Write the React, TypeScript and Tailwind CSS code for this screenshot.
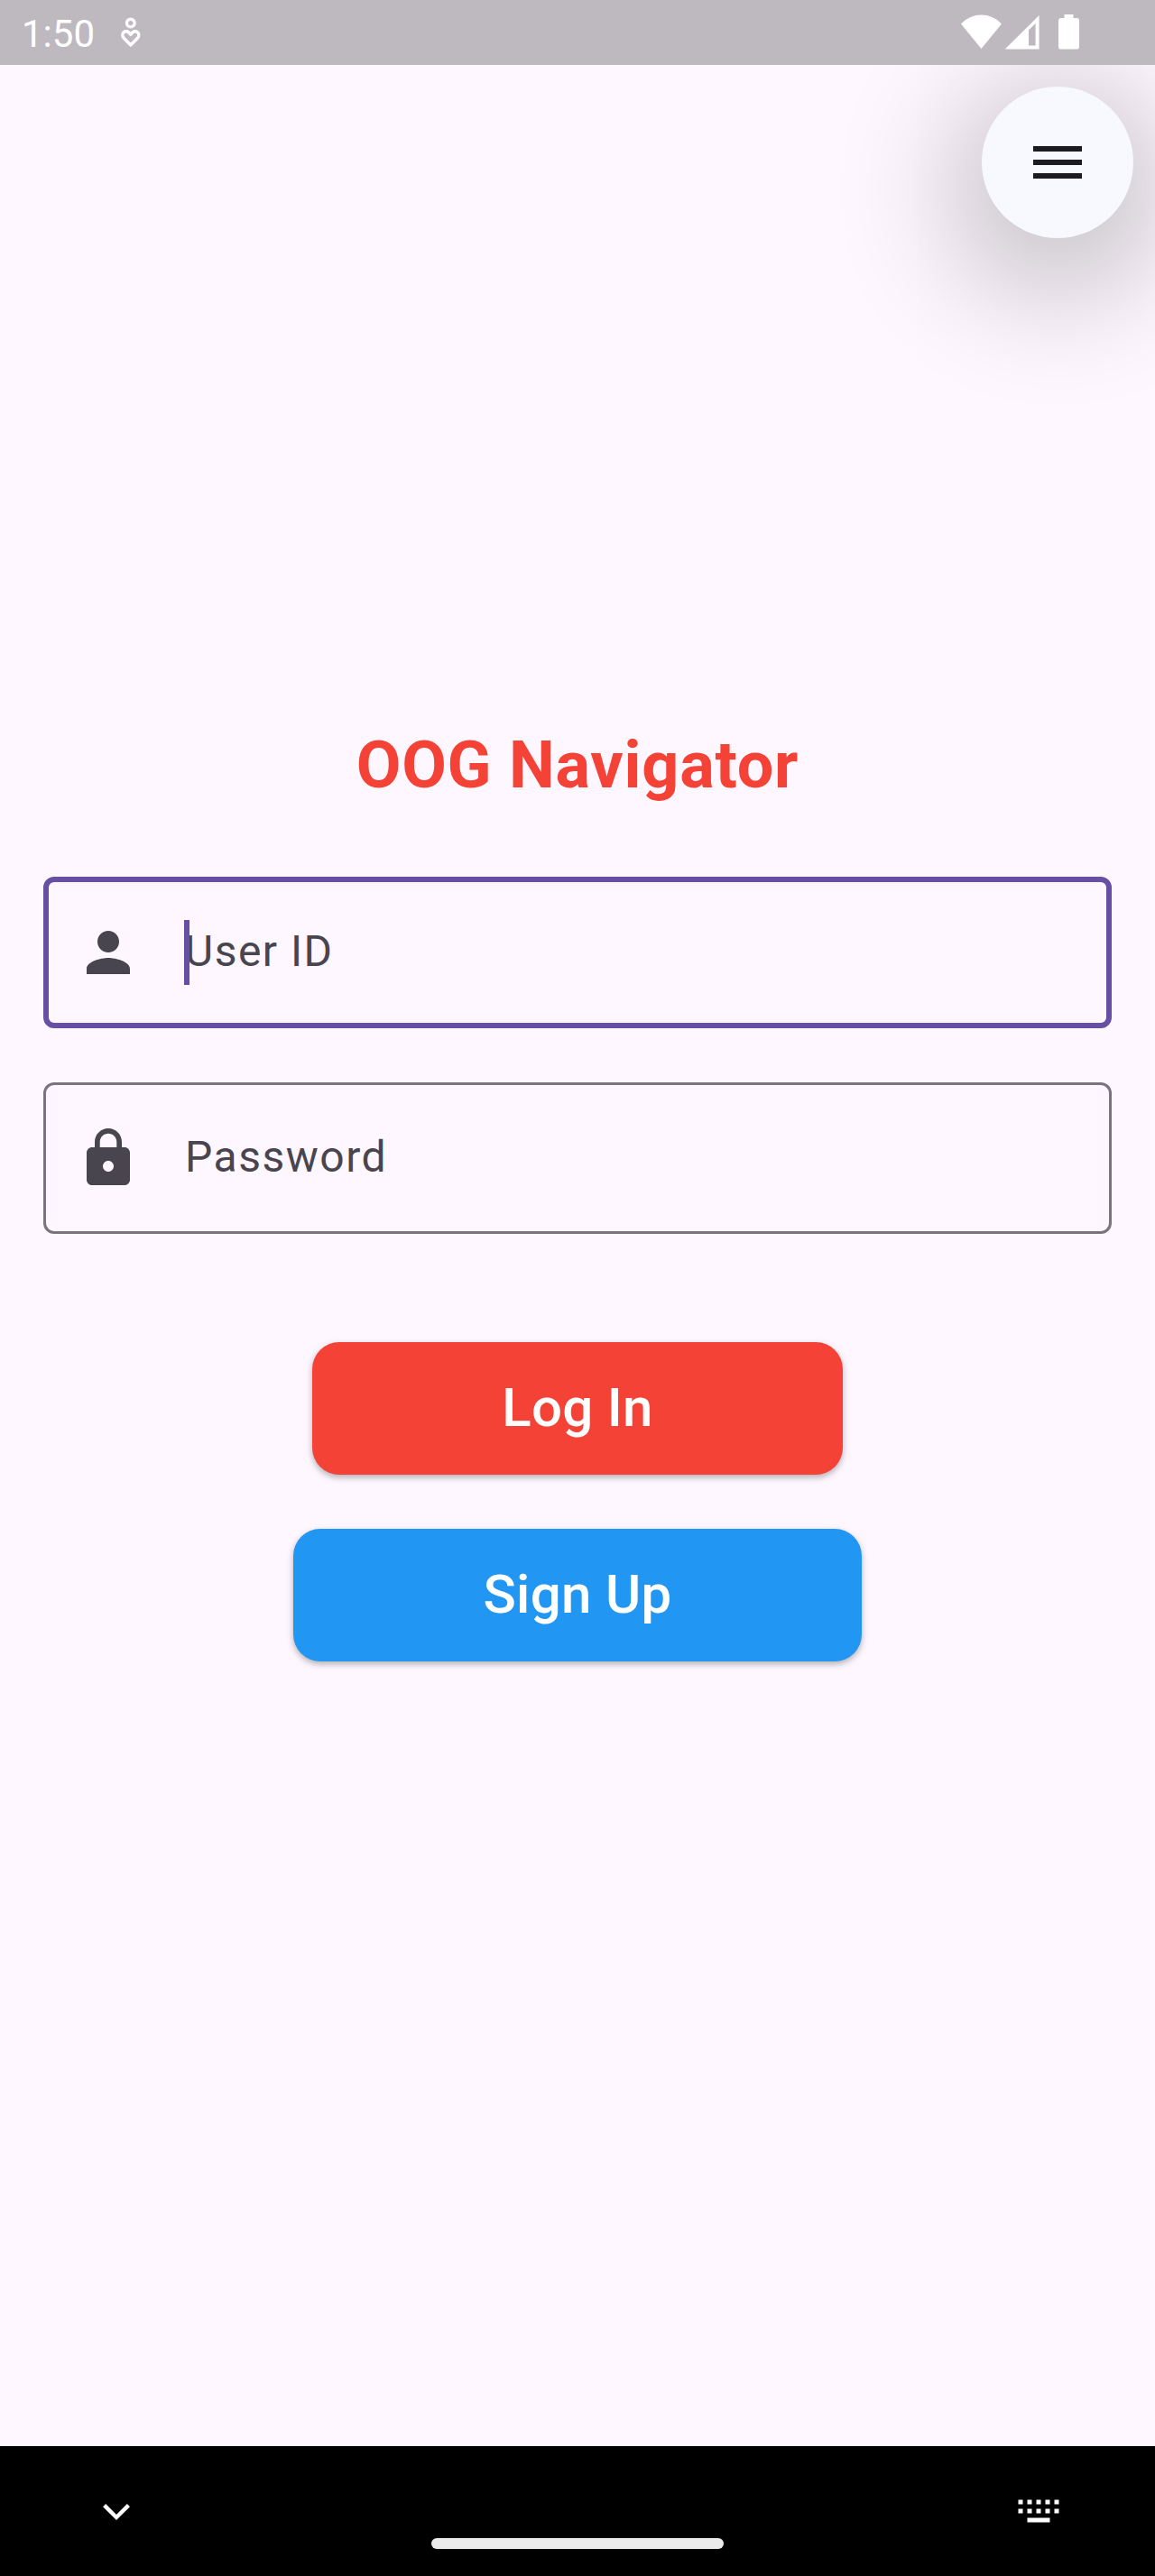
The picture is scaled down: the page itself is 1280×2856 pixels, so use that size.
import type { ReactNode } from "react";

function StatusBar() {
  return (
    <header className="relative z-10 flex h-[72px] shrink-0 items-center bg-[#beb9bf] text-white">
      <span className="ml-6 mt-[3px] h-[50px] w-[81px] whitespace-nowrap text-[42px] leading-[50px]">1:50</span>
      <svg className="ml-[26px] h-[72px] w-[28px]" viewBox="131 0 28 72" fill="none" stroke="currentColor" strokeWidth="3.4">
        <circle cx="144.8" cy="25.6" r="4.3" />
        <path
          d="M144.8 50 L137.2 42.3 C134.8 39.6 135.6 36 138.4 34.9 C141.6 33.9 143.5 36.2 144.8 38.4 C146.1 36.2 148 33.9 151.2 34.9 C154 36 154.8 39.6 152.4 42.3 Z"
          strokeLinejoin="round"
        />
      </svg>
      <svg className="ml-auto mr-[80px] h-[72px] w-[140px]" viewBox="1060 0 140 72" fill="currentColor">
        <path d="M1087.5 54 L1065 26.5 C1077.5 13.2 1097.5 13.2 1110 26.5 Z" />
        <path fillRule="evenodd" d="M1113.7 54.5 L1151.6 17 V54.5 Z M1140 33.3 V50.4 H1147.6 V26 Z" />
        <path d="M1179.5 16 H1189.5 V20 H1193.7 Q1196 20 1196 22.5 V52 Q1196 54.6 1193.7 54.6 H1175.3 Q1173 54.6 1173 52 V22.5 Q1173 20 1175.3 20 H1179.5 Z" />
      </svg>
    </header>
  );
}

function MenuButton() {
  return (
    <button
      aria-label="Menu"
      className="mr-6 mt-6 flex size-[168px] shrink-0 flex-col items-center justify-center gap-[9px] self-end rounded-full bg-[#f8f8ff] shadow-[0_30px_136px_30px_rgba(0,0,0,0.24)]"
    >
      <span className="h-1.5 w-[54px] bg-[#1c1b1f]" />
      <span className="h-1.5 w-[54px] bg-[#1c1b1f]" />
      <span className="h-1.5 w-[54px] bg-[#1c1b1f]" />
    </button>
  );
}

function Field({ label, icon, focused = false }: { label: string; icon: ReactNode; focused?: boolean }) {
  return (
    <div
      className={
        focused
          ? "flex h-[168px] items-center rounded-[12px] border-6 border-[#6750a4] pl-[30px]"
          : "flex h-[168px] items-center rounded-[12px] border-3 border-[#79747e] pl-[33px]"
      }
    >
      <svg className="size-[72px] text-[#49454f]" viewBox="0 0 24 24" fill="currentColor">
        {icon}
      </svg>
      <div className="relative ml-12 flex h-[72px] items-center">
        <span className="mb-0.5 ml-px whitespace-nowrap text-[48px] leading-[68px] tracking-[1.5px] text-[#49454f]">{label}</span>
        {focused && <span className="absolute left-0 top-0 h-[72px] w-1.5 bg-[#6750a4]" />}
      </div>
    </div>
  );
}

function NavigationBar() {
  return (
    <footer className="relative flex h-[144px] shrink-0 items-start justify-between bg-black px-[105px] pt-12">
      <svg className="size-12" viewBox="0 0 48 48" fill="none" stroke="#fff" strokeWidth="4.4">
        <path d="M10.6 17.6 L24 31 L37.4 17.6" />
      </svg>
      <span className="absolute bottom-[30px] left-1/2 h-3 w-[324px] -translate-x-1/2 rounded-full bg-[#ebebeb]" />
      <svg className="-mr-px size-12" viewBox="0 0 48 48" fill="#fff">
        {[0, 1, 2, 3, 4].map((i) => (
          <g key={i}>
            <rect x={0.5 + 10 * i} y="11.5" width="5" height="5" />
            <rect x={0.5 + 10 * i} y="21.5" width="5" height="5" />
          </g>
        ))}
        <rect x="10.5" y="31.5" width="25" height="5" />
      </svg>
    </footer>
  );
}

export default function App() {
  return (
    <div className="flex h-[2856px] w-[1280px] flex-col overflow-hidden bg-[#fef7ff] font-['Roboto',sans-serif]">
      <StatusBar />
      <MenuButton />
      <main className="flex flex-1 flex-col px-12 pt-[543px]">
        <h1 className="text-center text-[72px] font-bold leading-[84px] tracking-[0.75px] text-[#f44336]">OOG Navigator</h1>
        <form className="mt-[81px] flex flex-col">
          <Field
            focused
            label="User ID"
            icon={
              <path d="M12 12c2.21 0 4-1.79 4-4s-1.79-4-4-4-4 1.79-4 4 1.79 4 4 4zm0 2c-2.67 0-8 1.34-8 4v2h16v-2c0-2.66-5.33-4-8-4z" />
            }
          />
          <div className="h-[60px]" />
          <Field
            label="Password"
            icon={
              <path d="M18 8h-1V6c0-2.76-2.24-5-5-5S7 3.24 7 6v2H6c-1.1 0-2 .9-2 2v10c0 1.1.9 2 2 2h12c1.1 0 2-.9 2-2V10c0-1.1-.9-2-2-2zm-6 9c-1.1 0-2-.9-2-2s.9-2 2-2 2 .9 2 2-.9 2-2 2zM8.9 8V6c0-1.71 1.39-3.1 3.1-3.1s3.1 1.39 3.1 3.1v2z" />
            }
          />
          <button
            type="button"
            className="mt-[120px] h-[147px] w-[588px] self-center rounded-[30px] bg-[#f44336] pb-0.5 text-[60px] font-medium leading-[70px] tracking-[0.3px] text-white shadow-[0_3px_7px_rgba(0,0,0,0.3)]"
          >
            Log In
          </button>
          <button
            type="button"
            className="mt-[60px] h-[147px] w-[630px] self-center rounded-[30px] bg-[#2196f3] pb-0.5 text-[60px] font-medium leading-[70px] tracking-[0.3px] text-white shadow-[0_3px_7px_rgba(0,0,0,0.3)]"
          >
            Sign Up
          </button>
        </form>
      </main>
      <NavigationBar />
    </div>
  );
}
